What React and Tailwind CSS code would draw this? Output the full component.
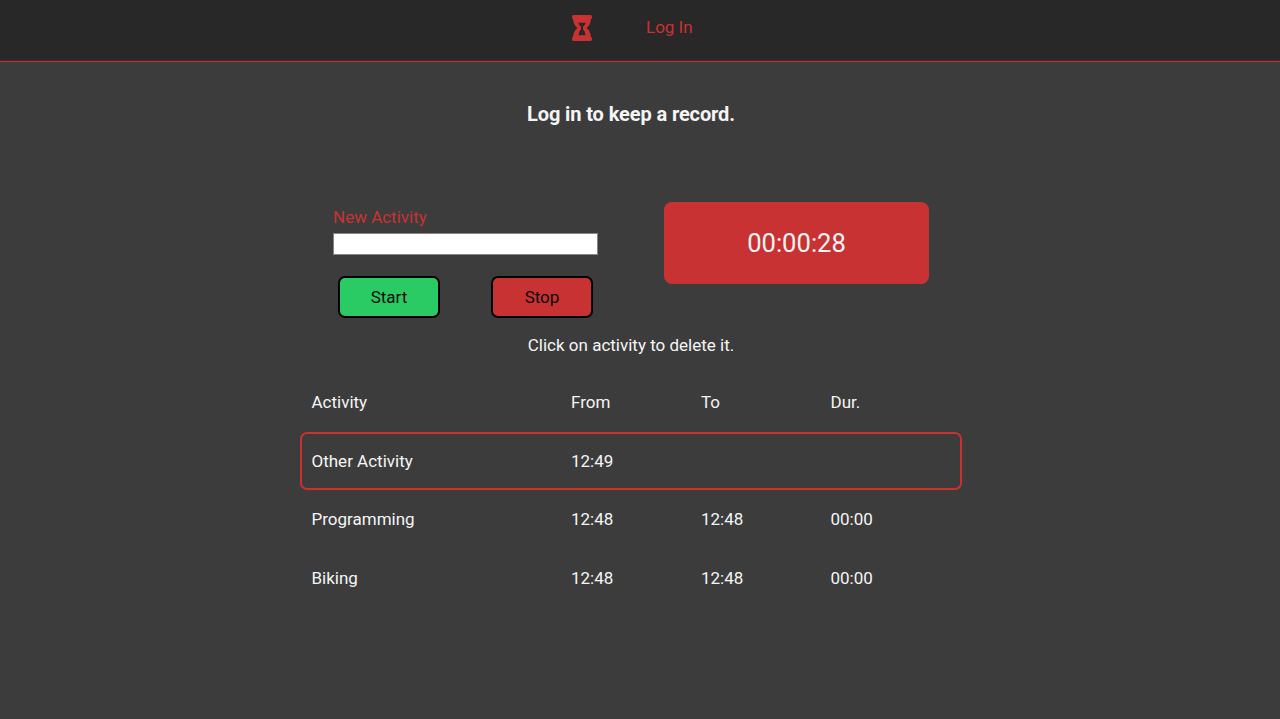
const rows = [
  { activity: "Other Activity", from: "12:49", to: "", duration: "", active: true },
  { activity: "Programming", from: "12:48", to: "12:48", duration: "00:00" },
  { activity: "Biking", from: "12:48", to: "12:48", duration: "00:00" },
];

function HourglassIcon() {
  return (
    <svg viewBox="0 0 20 26" className="h-[26px] w-5" fill="#c83232" aria-hidden="true">
      <path
        fillRule="evenodd"
        d="M1.6 0H18.4Q20 0 20 1.7V2.8Q20 3.8 19 4C18.7 8 17.2 11 14.6 13C17.2 15 18.7 18 19 22Q20 22.2 20 23.2V24.3Q20 26 18.4 26H1.6Q0 26 0 24.3V23.2Q0 22.2 1 22C1.3 18 2.8 15 5.4 13C2.8 11 1.3 8 1 4Q0 3.8 0 2.8V1.7Q0 0 1.6 0ZM6.3 7.8Q6.8 10.2 9 11.7V14.3Q6.8 16.5 6.5 20.3H13.5Q13.2 16.5 11 14.3V11.7Q13.2 10.2 13.7 7.8Z"
      />
    </svg>
  );
}

function Row({ activity, from, to, duration, active }) {
  return (
    <div
      className={`grid h-[58px] grid-cols-[259.5px_130px_129.5px_1fr] items-center rounded-[7px] border-2 pl-[9.5px] ${active ? "border-[#c83232]" : "border-transparent"}`}
    >
      <span>{activity}</span>
      <span>{from}</span>
      <span>{to}</span>
      <span>{duration}</span>
    </div>
  );
}

export default function App() {
  return (
    <div className="flex min-h-screen flex-col bg-[#3c3c3c] font-[Roboto,sans-serif] text-[17px] leading-5 text-[#f5f5f5]">
      <header className="flex h-[62px] border-b border-[#c03034] bg-[#282828] pl-[572px] pt-[15px] text-[#c83232] shadow-[inset_0_-1px_0_#46282a]">
        <HourglassIcon />
        <a href="#login" className="ml-[54px] mt-[2px]">Log In</a>
      </header>
      <main className="ml-[300px] w-[662px]">
        <h1 className="mt-10 text-center text-xl font-bold leading-6 tracking-[-0.11px]">Log in to keep a record.</h1>
        <section className="mt-[76px] flex h-[116px] pl-[33px]">
          <form className="w-[265px]">
            <label htmlFor="activity" className="mt-[5px] block text-[#c83232]">New Activity</label>
            <input
              id="activity"
              className="mt-[6px] block h-[22px] w-full border border-[#858585] bg-white px-1 text-black"
            />
            <div className="mt-[21px] flex justify-between px-[5px] text-[#0a0a0a]">
              <button type="button" className="h-[42px] w-[102px] rounded-[7px] border-2 border-black bg-[#2acb64]">Start</button>
              <button type="button" className="h-[42px] w-[102px] rounded-[7px] border-2 border-black bg-[#c83232]">Stop</button>
            </div>
          </form>
          <div className="ml-[66px] flex h-[82px] w-[265px] items-center justify-center rounded-lg bg-[#c83232] text-[25.6px]">
            00:00:28
          </div>
        </section>
        <p className="mt-[17px] text-center">Click on activity to delete it.</p>
        <section className="mt-[18px] flex flex-col gap-[0.7px]">
          <Row activity="Activity" from="From" to="To" duration="Dur." />
          {rows.map((row) => (
            <Row key={row.activity} {...row} />
          ))}
        </section>
      </main>
    </div>
  );
}
